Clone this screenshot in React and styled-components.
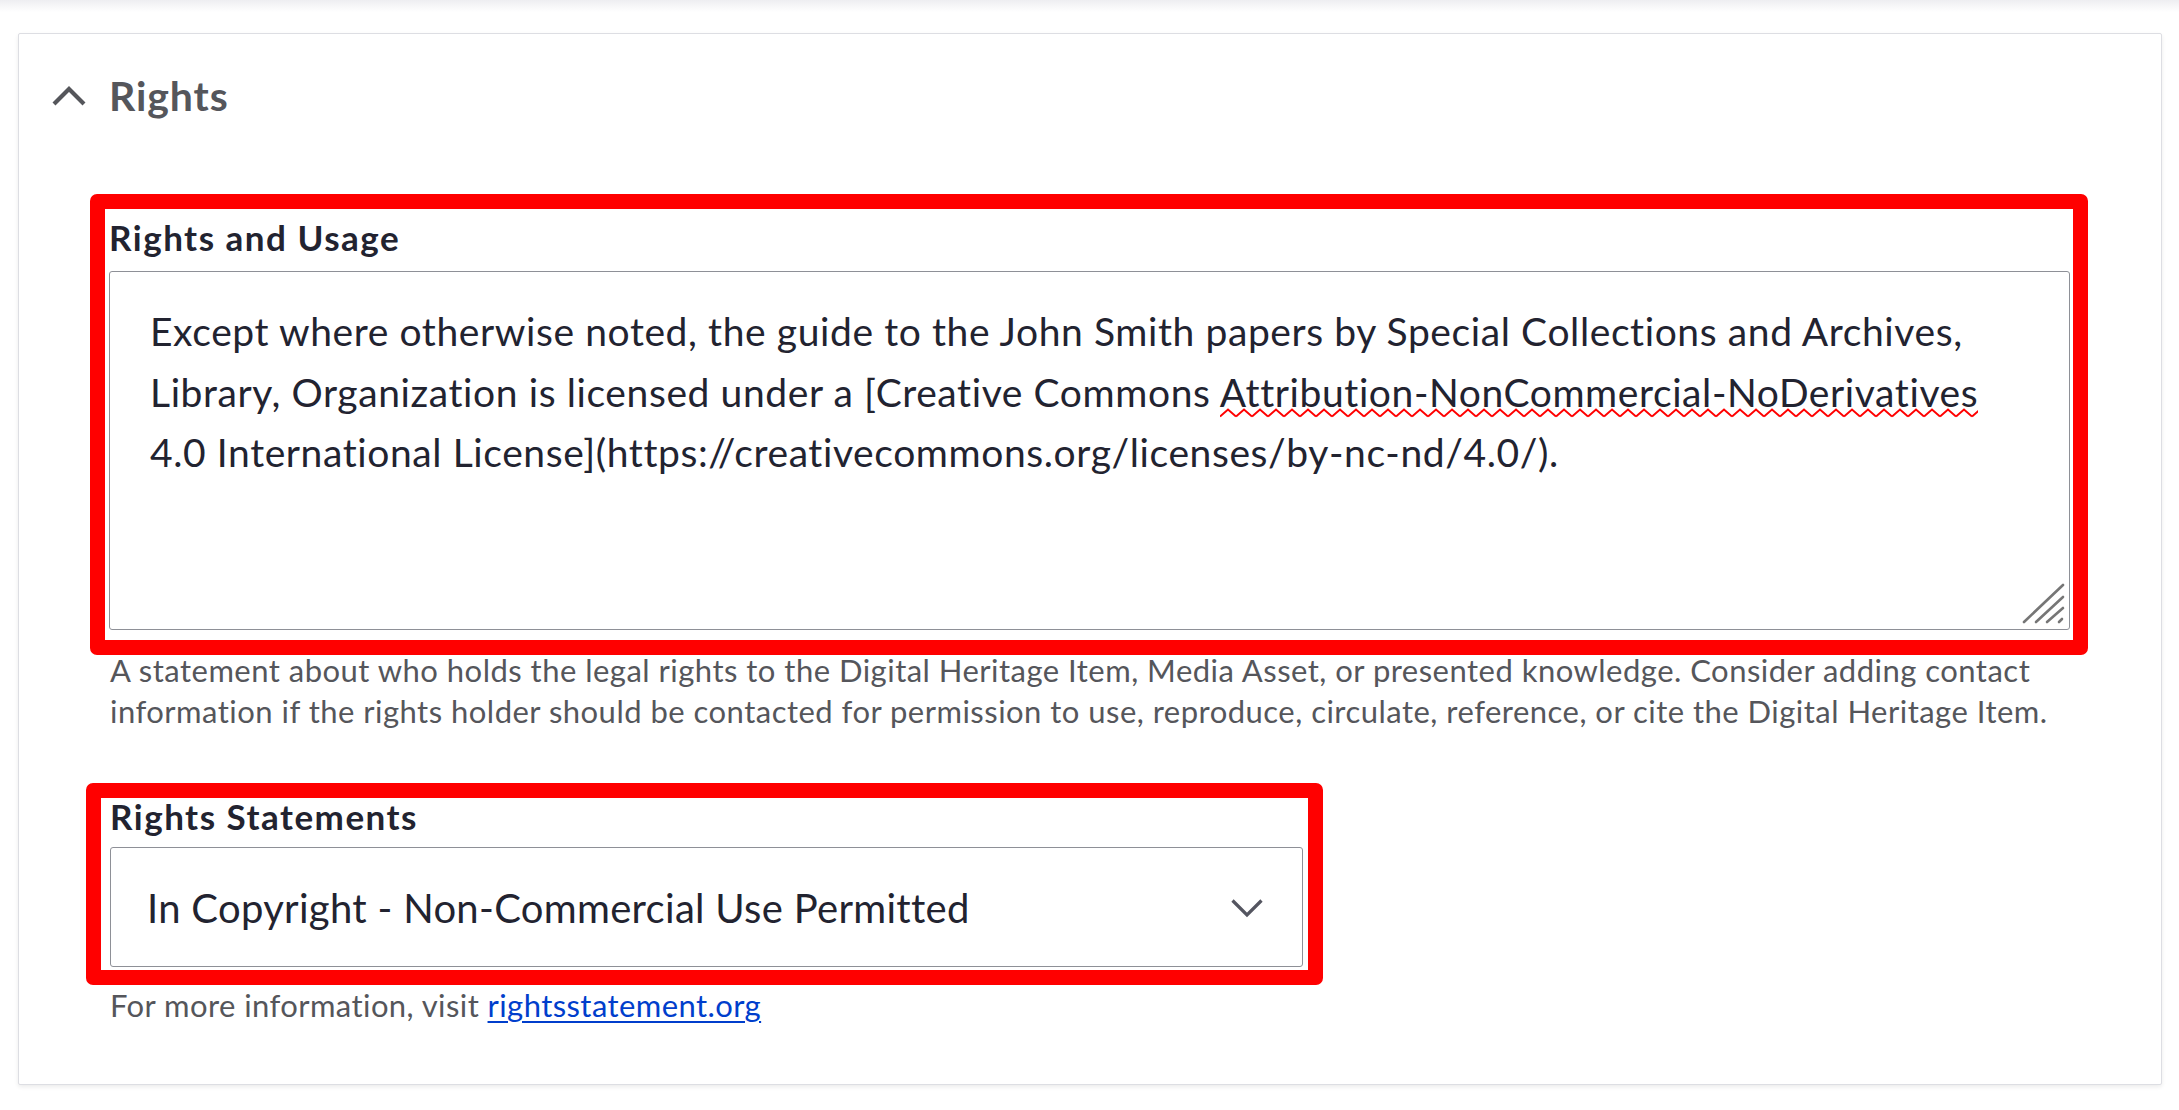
import styled, { createGlobalStyle } from "styled-components";

const GlobalStyle = createGlobalStyle`
  html, body {
    margin: 0;
    padding: 0;
    background: #ffffff;
  }
  body {
    font-family: Lato, "Noto Sans", sans-serif;
    color: #222330;
  }
`;

const squiggle =
  "url(\"data:image/svg+xml,%3Csvg xmlns='http://www.w3.org/2000/svg' width='16' height='10' viewBox='0 0 16 10'%3E%3Cpolyline points='0,8.5 8,1.5 16,8.5' fill='none' stroke='%23ff0000' stroke-width='2'/%3E%3C/svg%3E\")";

const Page = styled.div`
  padding: 0 17px 40px 18px;
`;

const PrevEdge = styled.div`
  height: 12px;
  margin: 0 -17px 21px -18px;
  background: linear-gradient(#eeeef1, #ffffff);
`;

const Card = styled.section`
  border: 1px solid #dddee3;
  border-radius: 2px;
  background: #ffffff;
  box-shadow: 0 2px 4px rgba(0, 0, 0, 0.08);
`;

const Summary = styled.div`
  display: flex;
  align-items: center;
  gap: 23px;
  height: 123px;
  padding-left: 33px;
  font-size: 41px;
  font-weight: 700;
  letter-spacing: 0.9px;
  line-height: 1;
  color: #55565b;
  cursor: pointer;
`;

const Content = styled.div`
  padding: 37px 73px 58px 67px;
`;

const Highlight = styled.div`
  box-sizing: border-box;
  border: 15px solid #ff0000;
  border-radius: 7px;
  padding: ${(p) => p.$pad};
  margin-left: ${(p) => p.$ml || 0}px;
  width: ${(p) => (p.$w ? `${p.$w}px` : "auto")};
`;

const Label = styled.label`
  display: block;
  font-size: 35px;
  font-weight: 700;
  letter-spacing: 1.5px;
  line-height: 34px;
  color: #222330;
`;

const TextBox = styled.div`
  position: relative;
  box-sizing: border-box;
  height: 359px;
  margin-top: 17px;
  padding: 29px 40px 0 40px;
  border: 1px solid #8e9097;
  border-radius: 3px;
  font-size: 39px;
  letter-spacing: 0.6px;
  line-height: 60.5px;
  color: #222330;
`;

const Misspelled = styled.span`
  padding-bottom: 3px;
  background-image: ${squiggle};
  background-repeat: repeat-x;
  background-position: left bottom;
  background-size: 16px 10px;
`;

const Grip = styled.svg`
  position: absolute;
  right: 3px;
  bottom: 4px;
`;

const Description = styled.p`
  margin: -5px 0 51px 24px;
  font-size: 31px;
  letter-spacing: 0.48px;
  line-height: 41px;
  color: #55565b;
`;

const Select = styled.div`
  display: flex;
  align-items: center;
  justify-content: space-between;
  box-sizing: border-box;
  height: 120px;
  margin-top: 14px;
  padding: 2px 39px 0 36px;
  border: 1px solid #8e9097;
  border-radius: 3px;
  font-size: 40px;
  letter-spacing: 0.3px;
  line-height: 48px;
  color: #222330;
`;

const Help = styled.div`
  margin-left: 24px;
  font-size: 31px;
  letter-spacing: 0.42px;
  line-height: 41px;
  color: #55565b;
`;

const HelpLink = styled.a`
  color: #003ecc;
  text-decoration: underline;
  text-decoration-thickness: 2px;
  text-underline-offset: 4px;
`;

function ChevronUp() {
  return (
    <svg width="34" height="20" viewBox="0 0 34 20" fill="none">
      <polyline points="2,18 17,3 32,18" stroke="#55565b" strokeWidth="4.2" />
    </svg>
  );
}

function ChevronDown() {
  return (
    <svg width="32" height="19" viewBox="0 0 32 19" fill="none">
      <polyline points="1.5,1.5 16,16 30.5,1.5" stroke="#545560" strokeWidth="3.2" />
    </svg>
  );
}

export default function App() {
  return (
    <>
      <GlobalStyle />
      <Page>
        <PrevEdge />
        <Card>
          <Summary>
            <ChevronUp />
            <span>Rights</span>
          </Summary>
          <Content>
            <Highlight $pad="11px 3px 10px 4px" $ml={4}>
              <Label>Rights and Usage</Label>
              <TextBox role="textbox" aria-multiline="true">
                Except where otherwise noted, the guide to the John Smith papers by Special
                Collections and Archives, Library, Organization is licensed under a [Creative
                Commons <Misspelled>Attribution-NonCommercial-NoDerivatives</Misspelled> 4.0
                International License](https://creativecommons.org/licenses/by-nc-nd/4.0/).
                <Grip width="44" height="42" viewBox="0 0 44 42" fill="none">
                  <g stroke="#767676" strokeWidth="2.6" strokeLinecap="round">
                    <line x1="2" y1="39" x2="41" y2="2" />
                    <line x1="14" y1="39" x2="41" y2="14" />
                    <line x1="25" y1="39" x2="41" y2="25" />
                    <line x1="37" y1="39" x2="40" y2="36" />
                  </g>
                </Grip>
              </TextBox>
            </Highlight>
            <Description>
              A statement about who holds the legal rights to the Digital Heritage Item, Media
              Asset, or presented knowledge. Consider adding contact information if the rights
              holder should be contacted for permission to use, reproduce, circulate, reference,
              or cite the Digital Heritage Item.
            </Description>
            <Highlight $pad="1px 5px 3px 9px" $w={1237}>
              <Label>Rights Statements</Label>
              <Select role="combobox">
                <span>In Copyright - Non-Commercial Use Permitted</span>
                <ChevronDown />
              </Select>
            </Highlight>
            <Help>
              For more information, visit <HelpLink href="#">rightsstatement.org</HelpLink>
            </Help>
          </Content>
        </Card>
      </Page>
    </>
  );
}
